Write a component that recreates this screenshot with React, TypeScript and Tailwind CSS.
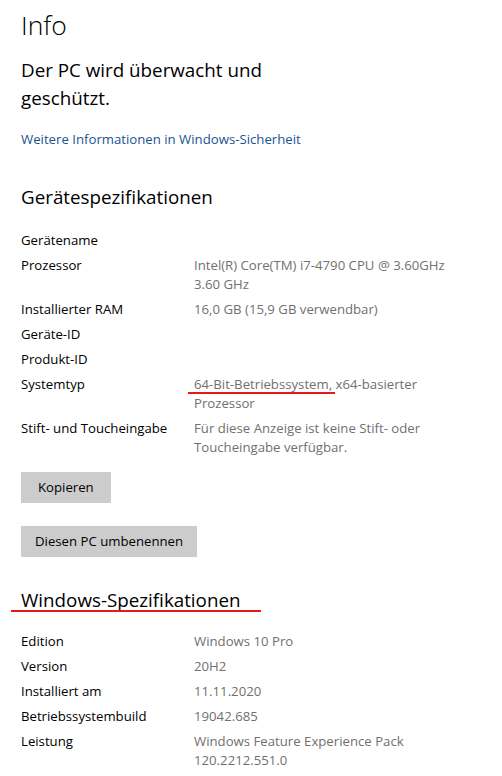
import type { ReactNode } from "react";

type Row = {
  label: string;
  value?: ReactNode;
};

const device: Row[] = [
  { label: "Gerätename" },
  {
    label: "Prozessor",
    value: (
      <>
        Intel(R) Core(TM) i7-4790 CPU @ 3.60GHz
        <br />
        3.60 GHz
      </>
    ),
  },
  { label: "Installierter RAM", value: "16,0 GB (15,9 GB verwendbar)" },
  { label: "Geräte-ID" },
  { label: "Produkt-ID" },
  {
    label: "Systemtyp",
    value: (
      <>
        <span className="relative">
          64-Bit-Betriebssystem,
          <span className="absolute left-[-6px] right-[-3px] top-[17px] h-[2px] bg-[#e3191c]" />
        </span>{" "}
        x64-basierter
        <br />
        Prozessor
      </>
    ),
  },
  {
    label: "Stift- und Toucheingabe",
    value: (
      <>
        Für diese Anzeige ist keine Stift- oder
        <br />
        Toucheingabe verfügbar.
      </>
    ),
  },
];

const windows: Row[] = [
  { label: "Edition", value: "Windows 10 Pro" },
  { label: "Version", value: "20H2" },
  { label: "Installiert am", value: "11.11.2020" },
  { label: "Betriebssystembuild", value: "19042.685" },
  {
    label: "Leistung",
    value: (
      <>
        Windows Feature Experience Pack
        <br />
        120.2212.551.0
      </>
    ),
  },
];

function SpecTable({ rows }: { rows: Row[] }) {
  return (
    <div className="flex flex-col gap-[6px]">
      {rows.map((row) => (
        <div key={row.label} className="grid grid-cols-[173px_1fr] leading-[19px]">
          <span className="text-black">{row.label}</span>
          <span className="whitespace-nowrap text-[#707070]">{row.value}</span>
        </div>
      ))}
    </div>
  );
}

export default function App() {
  return (
    <div className="min-h-[776px] bg-white px-[21px] pt-[6px] text-[13.2px] leading-[19px] text-black [font-family:'Segoe_UI','Open_Sans',sans-serif]">
      <h1 className="text-[26.5px] font-light leading-[38px]">Info</h1>
      <p className="mt-[12px] w-[270px] text-[18.8px] leading-[28px]">Der PC wird überwacht und geschützt.</p>
      <a className="mt-[18px] block text-[#1a5494]">Weitere Informationen in Windows-Sicherheit</a>

      <h2 className="mt-[34px] text-[18.8px] leading-[28px]">Gerätespezifikationen</h2>
      <div className="mt-[20px]">
        <SpecTable rows={device} />
      </div>

      <div className="mt-[15px] flex flex-col items-start gap-[23px]">
        <button className="h-[31px] bg-[#cccccc] px-[17px] text-black">Kopieren</button>
        <button className="h-[31px] bg-[#cccccc] px-[14px] text-black">Diesen PC umbenennen</button>
      </div>

      <h2 className="relative mt-[29px] inline-block text-[18.8px] leading-[28px]">
        Windows-Spezifikationen
        <span className="absolute left-[-10px] right-[-20px] top-[24px] h-[2px] bg-[#e3191c]" />
      </h2>
      <div className="mt-[18px]">
        <SpecTable rows={windows} />
      </div>
    </div>
  );
}
